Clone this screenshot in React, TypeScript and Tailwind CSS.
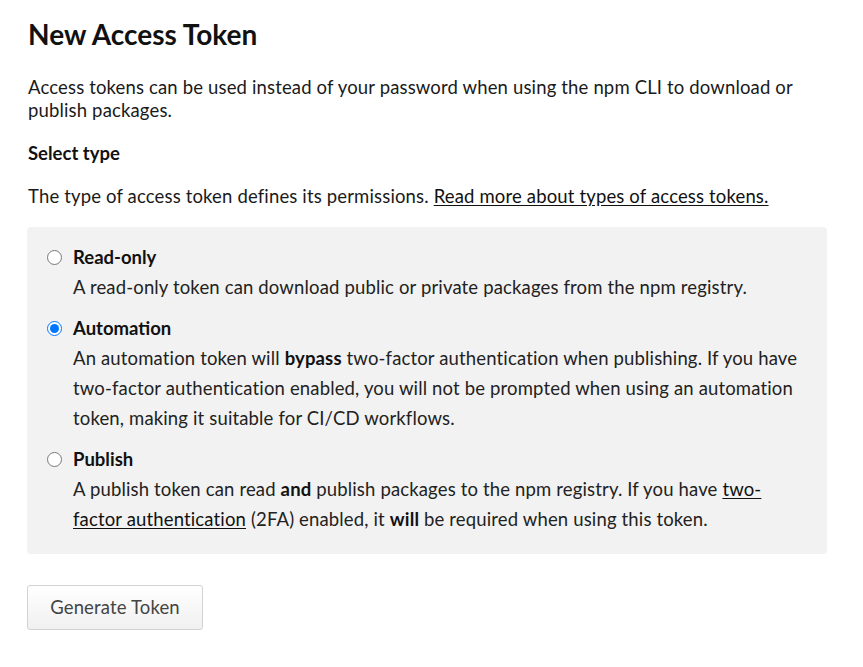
export default function App() {
  return (
    <div className="min-h-screen bg-white font-['Lato','Liberation_Sans',sans-serif] text-[#1a1a1a]">
      <div className="w-[800px] pl-[28px] pt-[14px]">
        <h1 className="h-[40px] text-[28px] font-bold leading-[40px] text-[#111]">New Access Token</h1>

        <p className="mt-[22px] whitespace-nowrap text-[18.5px] leading-[23px] tracking-[0.15px]">
          Access tokens can be used instead of your password when using the npm CLI to download or
          <br />
          publish packages.
        </p>

        <h2 className="mt-[20px] text-[18.5px] font-bold leading-[23px] text-[#111]">Select type</h2>

        <p className="mt-[20px] whitespace-nowrap text-[18.5px] leading-[23px] tracking-[0.15px]">
          The type of access token defines its permissions.{' '}
          <a href="#" className="underline underline-offset-2 text-[#111]">
            Read more about types of access tokens.
          </a>
        </p>
      </div>

      <div className="ml-[27px] mt-[19px] w-[800px] rounded-[4px] bg-[#f2f2f2] pb-[20px] pl-[20px] pr-[20px] pt-[15px]">
        <div className="flex flex-col gap-[11px]">
          <Option id="read" title="Read-only">
            A read-only token can download public or private packages from the npm registry.
          </Option>
          <Option id="auto" title="Automation" checked>
            An automation token will <b className="font-bold text-[#111]">bypass</b> two-factor authentication when publishing. If you have
            <br />
            two-factor authentication enabled, you will not be prompted when using an automation
            <br />
            token, making it suitable for CI/CD workflows.
          </Option>
          <Option id="pub" title="Publish">
            A publish token can read <b className="font-bold text-[#111]">and</b> publish packages to the npm registry. If you have{' '}
            <a href="#" className="underline underline-offset-2 text-[#111]">two-</a>
            <br />
            <a href="#" className="underline underline-offset-2 text-[#111]">factor authentication</a> (2FA) enabled, it{' '}
            <b className="font-bold text-[#111]">will</b> be required when using this token.
          </Option>
        </div>
      </div>

      <div className="ml-[27px] mt-[31px]">
        <button className="h-[45px] w-[176px] rounded-[3px] border border-[#d2d2d2] bg-gradient-to-b from-white to-[#f0f0f0] text-[18.5px] tracking-[0.15px] text-[#444]">
          Generate Token
        </button>
      </div>
    </div>
  )
}

function Option({
  id,
  title,
  checked,
  children,
}: {
  id: string
  title: string
  checked?: boolean
  children: React.ReactNode
}) {
  return (
    <label htmlFor={id} className="flex items-start">
      <div className="flex h-[30px] w-[26px] shrink-0 items-center">
        <input id={id} type="radio" name="type" defaultChecked={checked} className="m-0 h-[15px] w-[15px]" />
      </div>
      <div>
        <div className="text-[18.5px] font-bold leading-[30px] text-[#111]">{title}</div>
        <div className="whitespace-nowrap text-[18.5px] leading-[30px] tracking-[0.15px] text-[#222]">{children}</div>
      </div>
    </label>
  )
}
